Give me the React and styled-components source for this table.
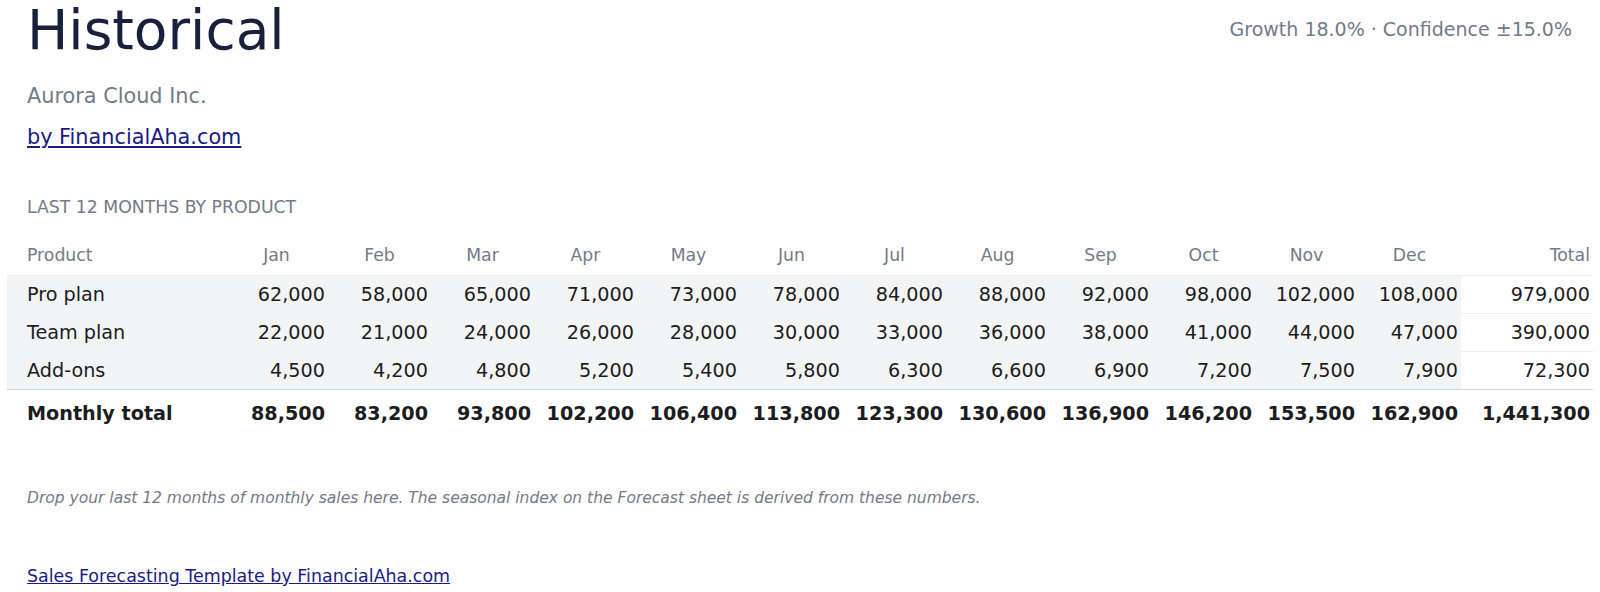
import React from 'react';
import styled, {createGlobalStyle} from 'styled-components';

const colors = {
  title: '#17213b',
  muted: '#737a8a',
  text: '#1c1d21',
  link: '#1b1a86',
  shade: '#f3f4f6',
  rule: '#eceef1',
  ruleStrong: '#d3d6dc',
};

const months = ['Jan', 'Feb', 'Mar', 'Apr', 'May', 'Jun', 'Jul', 'Aug', 'Sep', 'Oct', 'Nov', 'Dec'];

const products = [
  {name: 'Pro plan', values: [62000, 58000, 65000, 71000, 73000, 78000, 84000, 88000, 92000, 98000, 102000, 108000]},
  {name: 'Team plan', values: [22000, 21000, 24000, 26000, 28000, 30000, 33000, 36000, 38000, 41000, 44000, 47000]},
  {name: 'Add-ons', values: [4500, 4200, 4800, 5200, 5400, 5800, 6300, 6600, 6900, 7200, 7500, 7900]},
];

const fmt = (n) => n.toLocaleString('en-US');
const sum = (arr) => arr.reduce((a, b) => a + b, 0);

const GlobalStyle = createGlobalStyle`
  html, body {
    margin: 0;
    padding: 0;
    background: #ffffff;
  }
  body {
    font-family: 'DejaVu Sans', 'Noto Sans', sans-serif;
    color: ${colors.text};
  }
`;

const Page = styled.div`
  padding: 0 28px 0 27px;
  width: 1600px;
  box-sizing: border-box;
`;

const Header = styled.header`
  display: flex;
  justify-content: space-between;
  align-items: flex-start;
`;

const Title = styled.h1`
  margin: 0;
  font-size: 55px;
  line-height: 60px;
  font-weight: 400;
  color: ${colors.title};
`;

const Stats = styled.div`
  margin-top: 18px;
  font-size: 19px;
  color: ${colors.muted};
`;

const Company = styled.div`
  margin-top: 24px;
  font-size: 20.8px;
  color: ${colors.muted};
`;

const ByLink = styled.a`
  display: inline-block;
  margin-top: 17px;
  font-size: ${(p) => p.$size || '20.8px'};
  color: ${colors.link};
  text-decoration: underline;
`;

const SectionLabel = styled.div`
  margin-top: 48px;
  font-size: 17.28px;
  color: ${colors.muted};
  text-transform: uppercase;
`;

const Table = styled.table`
  margin: 18px -21px 0 -20px;
  width: calc(100% + 41px);
  table-layout: fixed;
  border-collapse: separate;
  border-spacing: 0;
`;

const HeadCell = styled.th`
  padding: 10px 3px;
  font-size: 17.28px;
  font-weight: 400;
  color: ${colors.muted};
  text-align: ${(p) => p.$align || 'center'};
  border-bottom: 1px solid ${colors.rule};
  ${(p) => p.$first && 'padding-left: 20px;'}
`;

const Cell = styled.td`
  padding: 7.1px 3px 6.9px;
  font-size: 19.2px;
  text-align: ${(p) => p.$align || 'right'};
  background: ${(p) => (p.$shaded ? colors.shade : '#ffffff')};
  border-bottom: 1px solid ${(p) => (p.$shaded ? colors.shade : colors.rule)};
  ${(p) => p.$first && 'padding-left: 20px;'}
  ${(p) => p.$last && 'border-bottom: none;'}
  white-space: nowrap;
`;

const TotalCell = styled.td`
  padding: 12px 3px;
  font-size: 19.2px;
  font-weight: 700;
  text-align: ${(p) => p.$align || 'right'};
  border-top: 1px solid ${colors.ruleStrong};
  ${(p) => p.$first && 'padding-left: 20px;'}
  white-space: nowrap;
`;

const Note = styled.p`
  margin: 52px 0 0;
  font-size: 15.5px;
  font-style: italic;
  color: ${colors.muted};
`;

const Footer = styled.div`
  margin-top: 59px;
`;

const App = () => {
  const monthTotals = months.map((_, i) => sum(products.map((p) => p.values[i])));
  const grand = sum(monthTotals);

  return (
    <>
      <GlobalStyle />
      <Page>
        <Header>
          <Title>Historical</Title>
          <Stats>Growth 18.0% · Confidence ±15.0%</Stats>
        </Header>
        <Company>Aurora Cloud Inc.</Company>
        <ByLink href="#">by FinancialAha.com</ByLink>

        <SectionLabel>Last 12 months by product</SectionLabel>
        <Table>
          <colgroup>
            <col style={{width: 218}} />
            {months.map((m) => (
              <col key={m} style={{width: 103}} />
            ))}
            <col style={{width: 132}} />
          </colgroup>
          <thead>
            <tr>
              <HeadCell $align="left" $first>
                Product
              </HeadCell>
              {months.map((m) => (
                <HeadCell key={m}>{m}</HeadCell>
              ))}
              <HeadCell $align="right">Total</HeadCell>
            </tr>
          </thead>
          <tbody>
            {products.map((p, r) => {
              const last = r === products.length - 1;
              return (
                <tr key={p.name}>
                  <Cell $align="left" $first $shaded $last={last}>
                    {p.name}
                  </Cell>
                  {p.values.map((v, i) => (
                    <Cell key={i} $shaded $last={last}>
                      {fmt(v)}
                    </Cell>
                  ))}
                  <Cell $last={last}>{fmt(sum(p.values))}</Cell>
                </tr>
              );
            })}
          </tbody>
          <tfoot>
            <tr>
              <TotalCell $align="left" $first>
                Monthly total
              </TotalCell>
              {monthTotals.map((v, i) => (
                <TotalCell key={i}>{fmt(v)}</TotalCell>
              ))}
              <TotalCell>{fmt(grand)}</TotalCell>
            </tr>
          </tfoot>
        </Table>

        <Note>
          Drop your last 12 months of monthly sales here. The seasonal index on the Forecast sheet is derived
          from these numbers.
        </Note>
        <Footer>
          <ByLink href="#" $size="17.45px" style={{marginTop: 0}}>
            Sales Forecasting Template by FinancialAha.com
          </ByLink>
        </Footer>
      </Page>
    </>
  );
};

export default App;
